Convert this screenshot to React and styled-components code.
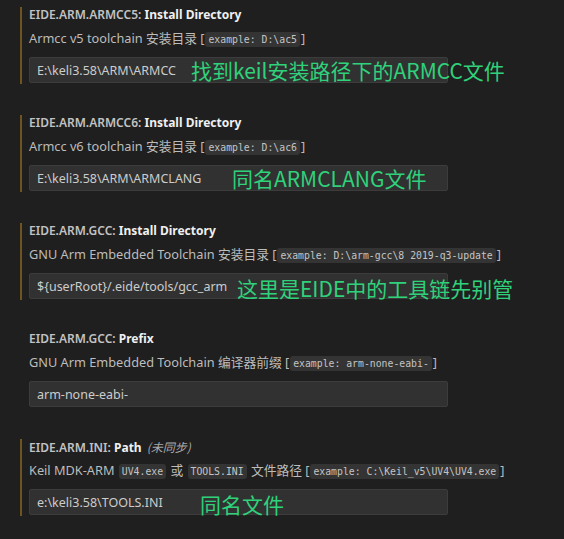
import React from "react";
import styled, { createGlobalStyle } from "styled-components";

const GlobalStyle = createGlobalStyle`
  html, body {
    margin: 0;
    padding: 0;
    background: #1f1f1f;
  }
  body {
    font-family: "Noto Sans", "Open Sans", "Noto Sans CJK SC", sans-serif;
  }
`;

const Page = styled.div`
  width: 564px;
  height: 539px;
  padding-top: 7px;
  box-sizing: border-box;
  overflow: hidden;
  background: #1f1f1f;
`;

const Setting = styled.div`
  height: 77px;
  box-sizing: border-box;
  margin-left: 20px;
  margin-bottom: 31px;
  padding-left: 7px;
  border-left: 2px solid ${(p) => (p.$modified ? "#6e5421" : "transparent")};
  display: flex;
  flex-direction: column;
`;

const Title = styled.div`
  height: 16px;
  font-size: 12px;
  line-height: 16px;
  white-space: nowrap;
`;

const Category = styled.span`
  color: #c2c2c2;
  font-weight: 600;
`;

const Name = styled.span`
  color: #f0f0f0;
  font-weight: 700;
`;

const Unsynced = styled.span`
  color: #a8a8a8;
  font-style: italic;
  margin-left: 5px;
  font-family: "Noto Sans CJK SC", sans-serif;
`;

const Description = styled.div`
  height: 18px;
  margin-top: 6px;
  font-size: 12.75px;
  line-height: 18px;
  color: #bcbcbc;
  white-space: nowrap;
  font-family: "Noto Sans", "Noto Sans CJK SC", sans-serif;
`;

const Code = styled.code`
  font-family: "DejaVu Sans Mono", "Liberation Mono", monospace;
  font-size: 9.8px;
  line-height: 14px;
  color: #c4c4c4;
  background: #343434;
  border-radius: 3px;
  padding: 2px 3px;
  margin: 0 1px;
`;

const InputRow = styled.div`
  position: relative;
  margin-top: 10px;
  width: 419px;
`;

const Input = styled.div`
  box-sizing: border-box;
  height: 26px;
  width: 100%;
  background: #313131;
  border: 1px solid #3c3c3c;
  border-radius: 2px;
  padding: 0 7px;
  display: flex;
  align-items: center;
  font-size: 12.5px;
  color: #cccccc;
  white-space: nowrap;
`;

const Note = styled.span`
  position: absolute;
  top: 50%;
  left: ${(p) => p.$left}px;
  transform: translateY(-50%);
  margin-top: ${(p) => p.$dy || 0}px;
  font-family: "Noto Sans CJK SC", "Noto Sans", sans-serif;
  font-size: 21px;
  line-height: 26px;
  color: #2fd27b;
  white-space: nowrap;
`;

const settings = [
  {
    cat: "EIDE.ARM.ARMCC5:",
    name: "Install Directory",
    desc: (
      <>
        Armcc v5 toolchain 安装目录 [<Code>example: D:\ac5</Code>]
      </>
    ),
    value: "E:\\keli3.58\\ARM\\ARMCC",
    note: "找到keil安装路径下的ARMCC文件",
    noteLeft: 162,
    modified: true,
  },
  {
    cat: "EIDE.ARM.ARMCC6:",
    name: "Install Directory",
    desc: (
      <>
        Armcc v6 toolchain 安装目录 [<Code>example: D:\ac6</Code>]
      </>
    ),
    value: "E:\\keli3.58\\ARM\\ARMCLANG",
    note: "同名ARMCLANG文件",
    noteLeft: 203,
    modified: true,
  },
  {
    cat: "EIDE.ARM.GCC:",
    name: "Install Directory",
    desc: (
      <>
        GNU Arm Embedded Toolchain 安装目录 [
        <Code>example: D:\arm-gcc\8 2019-q3-update</Code>]
      </>
    ),
    value: "${userRoot}/.eide/tools/gcc_arm",
    note: "这里是EIDE中的工具链先别管",
    noteLeft: 208,
    noteDy: 2,
    modified: true,
  },
  {
    cat: "EIDE.ARM.GCC:",
    name: "Prefix",
    desc: (
      <>
        GNU Arm Embedded Toolchain 编译器前缀 [
        <Code>example: arm-none-eabi-</Code>]
      </>
    ),
    value: "arm-none-eabi-",
    modified: false,
  },
  {
    cat: "EIDE.ARM.INI:",
    name: "Path",
    unsynced: "(未同步)",
    desc: (
      <>
        Keil MDK-ARM <Code>UV4.exe</Code> 或 <Code>TOOLS.INI</Code> 文件路径 [
        <Code>example: C:\Keil_v5\UV4\UV4.exe</Code>]
      </>
    ),
    value: "e:\\keli3.58\\TOOLS.INI",
    note: "同名文件",
    noteLeft: 171,
    noteDy: 2,
    modified: true,
  },
];

export default function App() {
  return (
    <Page>
      <GlobalStyle />
      {settings.map((s, i) => (
        <Setting key={i} $modified={s.modified}>
          <Title>
            <Category>{s.cat}</Category> <Name>{s.name}</Name>
            {s.unsynced && <Unsynced>{s.unsynced}</Unsynced>}
          </Title>
          <Description>{s.desc}</Description>
          <InputRow>
            <Input>{s.value}</Input>
            {s.note && (
              <Note $left={s.noteLeft} $dy={s.noteDy}>
                {s.note}
              </Note>
            )}
          </InputRow>
        </Setting>
      ))}
    </Page>
  );
}
